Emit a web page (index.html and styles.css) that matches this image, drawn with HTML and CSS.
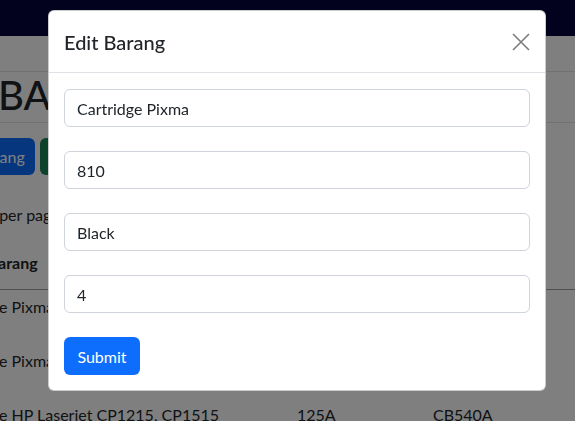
FILE: index.html
```html
<!DOCTYPE html>
<html lang="id">
<head>
<meta charset="utf-8">
<title>Edit Barang</title>
<link rel="stylesheet" href="styles.css">
</head>
<body>
<nav class="navbar"></nav>
<main class="page">
  <div class="rule"></div>
  <h1 class="title">BARANG</h1>
  <div class="rule rule-2"></div>
  <div class="actions">
    <button class="btn btn-blue">Tambah Barang</button>
    <button class="btn btn-green">Export</button>
  </div>
  <div class="per-page">entries per page</div>
  <table class="table">
    <thead>
      <tr><th class="c1">Nama Barang</th><th class="c2">Tipe</th><th class="c3">Kode</th><th class="c4"><span class="sort"></span></th></tr>
    </thead>
    <tbody>
      <tr><td class="c1">Cartridge Pixma</td><td class="c2">810</td><td class="c3">Black</td><td></td></tr>
      <tr><td class="c1">Cartridge Pixma</td><td class="c2">811</td><td class="c3">Color</td><td></td></tr>
      <tr><td class="c1">Cartridge HP Laserjet CP1215, CP1515</td><td class="c2">125A</td><td class="c3">CB540A</td><td></td></tr>
    </tbody>
  </table>
</main>
<div class="backdrop"></div>
<div class="modal">
  <div class="modal-header">
    <h5 class="modal-title">Edit Barang</h5>
    <button class="btn-close" aria-label="Close">
      <svg width="18" height="18" viewBox="0 0 18 18"><path d="M1 1L17 17M17 1L1 17" stroke="#000" stroke-width="1.7" fill="none"/></svg>
    </button>
  </div>
  <form class="modal-body">
    <input class="form-control" type="text" value="Cartridge Pixma">
    <input class="form-control" type="text" value="810">
    <input class="form-control" type="text" value="Black">
    <input class="form-control" type="text" value="4">
    <button type="button" class="btn-submit">Submit</button>
  </form>
</div>
</body>
</html>
```

FILE: styles.css
```css
* { box-sizing: border-box; }
html, body { margin: 0; height: 100%; }
body {
  font-family: Lato, "Liberation Sans", sans-serif;
  font-size: 16px;
  color: #212529;
  background: #fff;
  overflow: hidden;
}
.navbar { height: 36px; background: #04043e; }
.page { margin-left: -58px; width: 680px; }
.rule { height: 1px; background: #dee2e6; margin-top: 35px; }
.rule-2 { margin-top: 14px; }
.title {
  margin: 0; padding-left: 56px;
  font-size: 40px; font-weight: 500; line-height: 26px; margin-top: 10px;
}
.actions { display: flex; gap: 5px; margin-top: 15px; }
.btn {
  border: 0; border-radius: 6px; color: #fff; font: inherit;
  height: 37px; padding: 0 12px; white-space: nowrap; flex: none;
}
.btn-blue { background: #0d6efd; width: 130px; margin-left: -37px; }
.btn-green { background: #198754; width: 90px; }
.per-page { margin-top: 28px; padding-left: 5px; line-height: 24px; white-space: nowrap; }
.table { border-collapse: collapse; margin-top: 16px; width: 665px; }
.table th, .table td { text-align: left; padding: 8px 0; line-height: 24px; white-space: nowrap; }
.table th { border-bottom: 1px solid #9aa0a6; padding-bottom: 14px; }
.table td { height: 54px; vertical-align: top; padding-top: 5px; }
.c1 { width: 355px; }
.c2 { width: 136px; }
.c3 { width: 150px; }
.sort { display: inline-block; width: 4px; height: 16px; }
.backdrop { position: fixed; inset: 0; background: rgba(0,0,0,0.5); }
.modal {
  position: fixed; top: 10px; left: 48px; width: 498px;
  background: #fff; border: 1px solid rgba(0,0,0,0.2); border-radius: 6px;
}
.modal-header {
  display: flex; align-items: center; justify-content: space-between;
  padding: 15px; border-bottom: 1px solid #dee2e6; height: 62px;
}
.modal-title { margin: 0; font-size: 20px; font-weight: 500; line-height: 30px; color: #212529; }
.btn-close {
  border: 0; background: transparent; padding: 0; width: 18px; height: 18px;
  opacity: 0.5; display: flex;
}
.modal-body { display: flex; flex-direction: column; align-items: flex-start; gap: 24px; padding: 16px 15px 15px 15px; }
.form-control {
  width: 100%; height: 38px; padding: 6px 12px; font: inherit; font-size: 16px;
  color: #212529; border: 1px solid #ced4da; border-radius: 6px; background: #fff;
}
.btn-submit {
  height: 38px; width: 76px; border: 0; border-radius: 6px; background: #0d6efd; color: #fff;
  font: inherit; font-size: 16px;
}
```
